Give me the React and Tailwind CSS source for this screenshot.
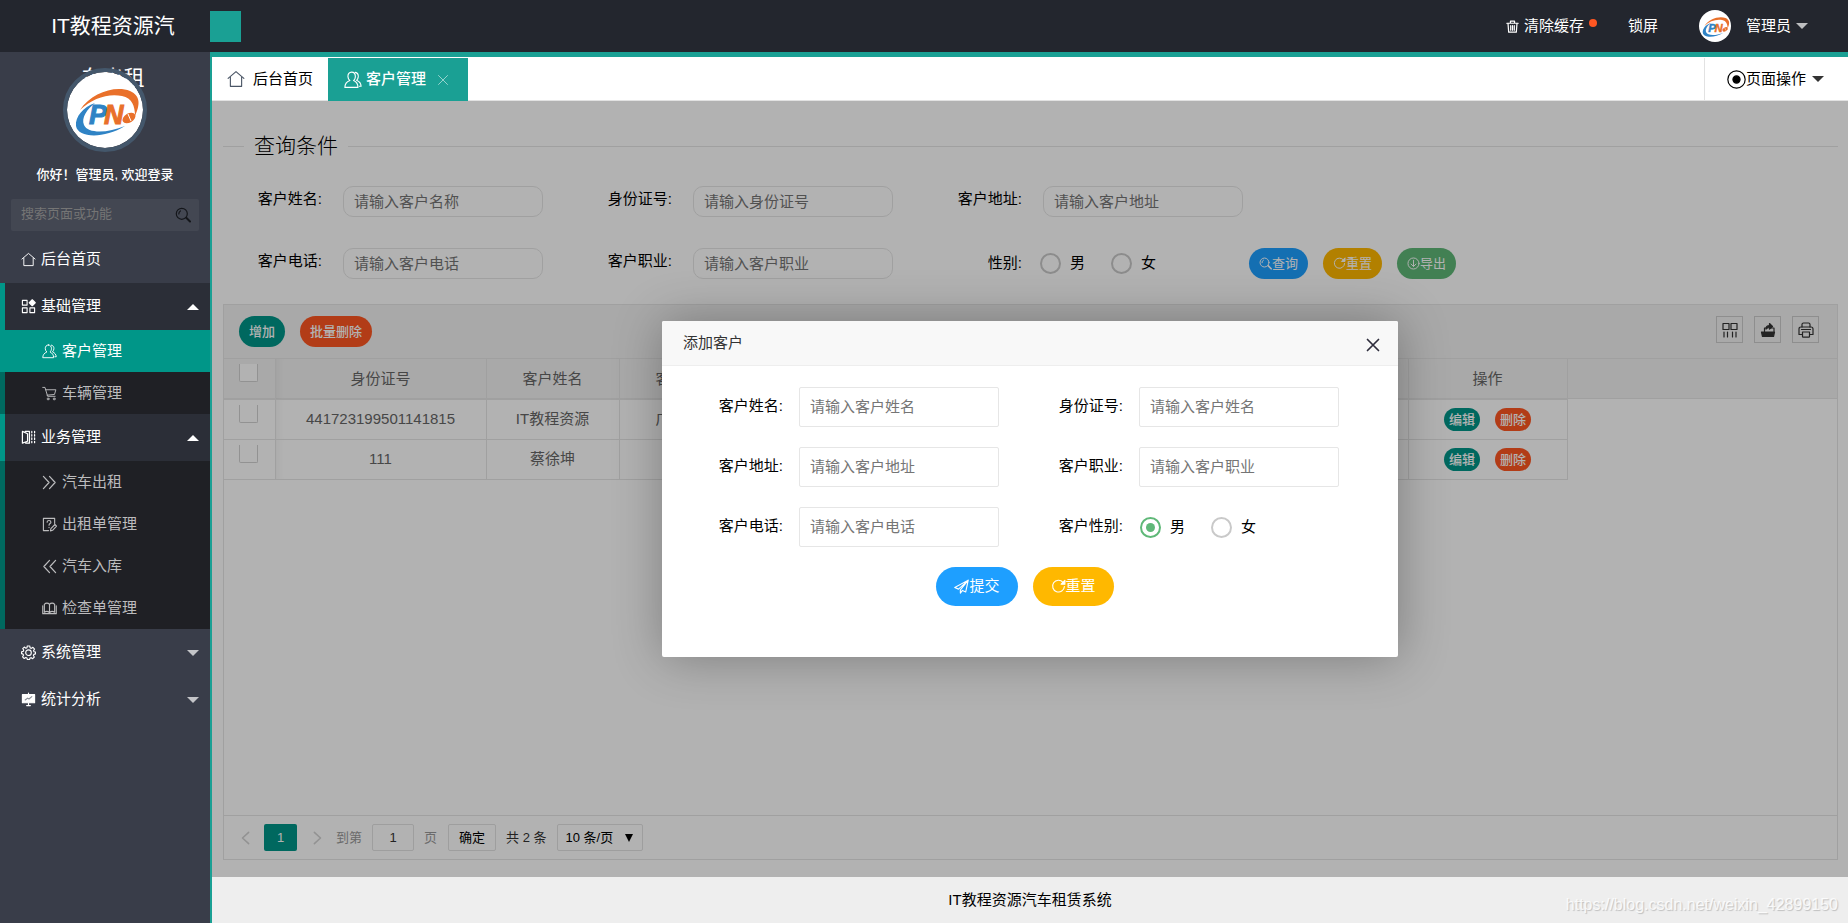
import React, { useState } from 'react';

const fontStack = "font-['Liberation_Sans','Noto_Sans_CJK_SC',sans-serif]";

const Icon = ({ className = 'size-[15px]', children, width = 1.2 }) => (
  <svg
    viewBox="0 0 16 16"
    className={`shrink-0 ${className}`}
    fill="none"
    stroke="currentColor"
    strokeWidth={width}
    strokeLinecap="round"
    strokeLinejoin="round"
    aria-hidden="true"
  >
    {children}
  </svg>
);

const HomeIcon = ({ className }) => (
  <Icon className={className} width={1}>
    <path d="M1 7.500 8 1.500l7 6" />
    <path d="M3 6.500v8h10v-8" />
  </Icon>
);

const UserIcon = ({ className }) => (
  <Icon className={className} width={1}>
    <path d="M6.800 1C4.600 1 3.400 2.800 3.500 5c.1 1.600.7 2.700 1.700 3.500C2.500 9.500.8 11.800.8 14.600h11.600c0-2.800-1.300-5-3.900-6.100 1-.9 1.600-2 1.600-3.500C10.100 2.800 9 1 6.800 1Z" />
    <path d="M10 1.200c1.800.3 2.800 1.800 2.700 3.800-.1 1.300-.6 2.500-1.500 3.300 2.300 1 3.900 3 4 5.300h-1.500" />
  </Icon>
);

const GridIcon = () => (
  <Icon>
    <path d="M1.500 1.500h5v5h-5zM1.500 9.500h5v5h-5zM9.500 9.500h5v5h-5z" />
    <path d="M12 .8 15.200 4 12 7.200 8.800 4Z" fill="currentColor" />
  </Icon>
);

const CartIcon = () => (
  <Icon width={1}>
    <path d="M.8 1.500h2.400L6 11h8" />
    <path d="M3.800 4h11l-1.500 5-7.800.8" />
    <circle cx="6.500" cy="13.800" r="1" />
    <circle cx="13" cy="13.800" r="1" />
  </Icon>
);

const ContractIcon = () => (
  <Icon width={1.3}>
    <path d="M1.500 1.500v12.500M1.500 1.500 7 4v8l-5.500 2M4.500 1.500H9v12.500H5" />
    <path d="M11.500 1.500v13M14.500 1.500v13" strokeDasharray="1.500 2" />
  </Icon>
);

const ForwardIcon = () => (
  <Icon width={1.3}>
    <path d="m1.500 1.500 6 6.500-6 6.500M8 1.500 14 8l-6 6.500" />
  </Icon>
);

const BackwardIcon = () => (
  <Icon width={1.3}>
    <path d="M8 1.500 2 8l6 6.500M14.500 1.500l-6 6.500 6 6.500" />
  </Icon>
);

const SurveyIcon = () => (
  <Icon>
    <path d="M7 14.500H1.500v-13h12V7" />
    <path d="M5.500 5.500c0-2.500 4-2.300 4 0 0 1.500-2 1.500-2 3.200M7.500 11v.3" />
    <path d="m9 14.800.5-2.500L13.800 8l1.700 1.700-4.200 4.500Z" />
  </Icon>
);

const BookIcon = () => (
  <Icon>
    <path d="M8 3.500V13M8 3.500C6.500 1.800 4 1.800 2.500 3.500V12c1.500-1 4-1 5.500.5 1.500-1.500 4-1.500 5.500-.5V3.500C12 1.800 9.500 1.800 8 3.500Z" />
    <path d="M.8 5v8.500h14.400V5" />
  </Icon>
);

const GearIcon = () => (
  <Icon>
    <path d="M6.700 1h2.600l.4 2 1.300.6L12.700 2.500l1.800 1.800L13.400 6l.5 1.200 1.600.3v2l-1.800.5-.5 1.200 1 1.600-1.700 1.800-1.700-1.100-1.200.5-.5 1.500H6.800l-.5-1.700-1.200-.5-1.700 1.100-1.700-1.800 1-1.700-.5-1.200L.6 9.200v-2l1.800-.4L2.900 5.500 1.800 3.800 3.500 2.200 5.200 3.400 6.400 2.900Z" />
    <circle cx="8" cy="8.200" r="3" />
  </Icon>
);

const BoardIcon = () => (
  <Icon>
    <path d="M1.500 2.800h13v8.700h-13z" fill="currentColor" />
    <path d="M8 1v2M8 12v2M6 14.500h4" />
    <path d="m4.500 8.500 2.500-2 1.500 1 3-2.500" className="stroke-[#8b8e96]" />
  </Icon>
);

const TrashIcon = () => (
  <Icon className="size-[13px]" width={1.5}>
    <path d="M1 4h14M5.500 4V1.500h5V4M2.500 4.500l.8 10.500h9.400l.8-10.500M5.800 7v5.500M8 7v5.500M10.200 7v5.500" />
  </Icon>
);

const SearchIcon = ({ className }) => (
  <Icon className={className}>
    <circle cx="6.800" cy="6.800" r="5.500" />
    <path d="M3.800 7c0-1.500.6-2.500 1.600-3.100" />
    <path d="m11.500 11 3.500 3.500" strokeWidth={2} />
  </Icon>
);

const RefreshIcon = ({ className }) => (
  <Icon className={className}>
    <path d="M12.800 3.500A6.300 6.300 0 1 0 14.300 8" />
    <path d="M14.800 1.500v4h-4Z" fill="currentColor" />
  </Icon>
);

const DownloadIcon = ({ className }) => (
  <Icon className={className}>
    <circle cx="8" cy="8" r="6.800" />
    <path d="M8 4v7.500M5 8.700l3 3 3-3" />
  </Icon>
);

const SendIcon = ({ className }) => (
  <Icon className={className}>
    <path d="M15.200 1.200.8 9l4 1.800L15.200 1.200 6.800 11.500V15l2.200-2.800 3.500 1.600Z" />
  </Icon>
);

const ColumnsIcon = () => (
  <Icon className="size-4">
    <path d="M1 1.500h6v6H1zM9 1.500h6v6H9zM2 10v5M5.500 10v5M10.500 10v5M14 10v5" />
  </Icon>
);

const ExportIcon = () => (
  <Icon className="size-4">
    <path d="M1.500 10h13l-1 4.500h-11Z" fill="currentColor" />
    <path d="M4.500 9.500V6H7M10.500 6H14v3.500" />
    <path d="M6 7c0-2 1.500-3.500 3.500-3.500V1.500l3 3-3 2.500V5.500C8 5.500 7 6 6 7Z" fill="currentColor" />
  </Icon>
);

const PrintIcon = () => (
  <Icon className="size-4">
    <path d="M4 5V2.500C4 1.500 4.500 1 5.500 1h5c1 0 1.500.5 1.500 1.500V5" />
    <path d="M4 12.500H1V7c0-1.300.7-2 2-2h10c1.300 0 2 .7 2 2v5.500h-3M3.500 7.500h9" />
    <path d="M4.500 10h7v4.500c0 .5-.2.700-.7.700H5.200c-.5 0-.7-.2-.7-.7Z" />
  </Icon>
);

const Caret = ({ up, className = 'fill-white/70' }) => (
  <svg viewBox="0 0 12 6" className={`h-1.5 w-3 shrink-0 ${className}`} aria-hidden="true">
    <path d={up ? 'M0 6 6 0l6 6Z' : 'M0 0l6 6 6-6Z'} />
  </svg>
);

const Logo = ({ className }) => (
  <svg viewBox="0 0 76 76" className={className} role="img" aria-label="PN">
    <circle cx="38" cy="38" r="38" fill="#fff" />
    <path
      d="M13 38C24 21 48 13 63 19c11 5 10 14 5 25 0-10-3-18-13-20-13-3-30 2-42 14Z"
      fill="#e9702a"
    />
    <path
      d="M28 31C16 35 8 45 9 54c2 12 28 13 49 0-17 7-37 8-41-1-3-7 3-16 11-22Z"
      fill="#2f83c5"
    />
    <g fontFamily="Liberation Sans, sans-serif" fontSize="27" fontWeight="700" fontStyle="italic">
      <text x="22" y="52" fill="#2f83c5" stroke="#2f83c5">P</text>
      <text x="37" y="52" fill="#e9702a" stroke="#e9702a">N</text>
    </g>
    <ellipse cx="62" cy="46" rx="7" ry="4.500" fill="#e9702a" transform="rotate(-30 62 46)" />
    <path d="m61 42 3 7" stroke="#fff" strokeWidth="1" />
  </svg>
);

const menu = [
  { name: '后台首页', icon: <HomeIcon /> },
  {
    name: '基础管理',
    icon: <GridIcon />,
    open: true,
    children: [
      { name: '客户管理', icon: <UserIcon />, active: true },
      { name: '车辆管理', icon: <CartIcon /> }
    ]
  },
  {
    name: '业务管理',
    icon: <ContractIcon />,
    open: true,
    children: [
      { name: '汽车出租', icon: <ForwardIcon /> },
      { name: '出租单管理', icon: <SurveyIcon /> },
      { name: '汽车入库', icon: <BackwardIcon /> },
      { name: '检查单管理', icon: <BookIcon /> }
    ]
  },
  { name: '系统管理', icon: <GearIcon />, children: [] },
  { name: '统计分析', icon: <BoardIcon />, children: [] }
];

const customers = [
  { identity: '441723199501141815', name: 'IT教程资源', address: '广东广州' },
  { identity: '111', name: '蔡徐坤', address: '' }
];

const columns = [
  { title: '身份证号', key: 'identity', width: 'w-[211px] min-w-[211px]' },
  { title: '客户姓名', key: 'name', width: 'w-[133px] min-w-[133px]' },
  { title: '客户地址', key: 'address', width: 'w-[133px] min-w-[133px]' },
  { title: '', key: 'more', width: 'w-[656px] min-w-[656px]' }
];

const Header = () => (
  <header className="relative z-10 flex h-[52px] shrink-0 bg-[#23262e] text-white">
    <div className="flex w-[210px] shrink-0 justify-center pl-4">
      <h1 className="w-[130px] text-center text-[21px] leading-[52px]">
        IT教程资源汽车出租
      </h1>
    </div>
    <button type="button" aria-label="收起菜单" className="mt-[11px] size-[31px] bg-[#1aa094]" />
    <ul className="ml-auto flex items-center pr-10 text-[15px]">
      <li className="mr-[31px]">
        <a href="#cache" className="flex items-center gap-[5px]">
          <TrashIcon />
          清除缓存
          <span className="mb-1.5 size-2 rounded-full bg-[#ff5722]" />
        </a>
      </li>
      <li className="mr-[41px]">
        <a href="#lock">锁屏</a>
      </li>
      <li>
        <a href="#user" className="flex items-center">
          <Logo className="size-8" />
          <span className="mr-[5px] ml-[15px]">管理员</span>
          <Caret />
        </a>
      </li>
    </ul>
  </header>
);

const Sidebar = () => (
  <aside className="w-[210px] shrink-0 bg-[#393d49] text-white">
    <div className="flex flex-col items-center pt-4">
      <Logo className="relative z-20 size-[84px] rounded-full border-4 border-[#44576b]" />
      <p className="mt-[13px] text-[13px] leading-5 font-medium">你好！管理员, 欢迎登录</p>
    </div>
    <div className="mx-[11px] mt-3.5 mb-[5px] flex h-8 items-center rounded-xs bg-white/5 pr-2 pl-2.5">
      <input
        type="text"
        aria-label="搜索页面或功能"
        placeholder="搜索页面或功能"
        className="min-w-0 flex-1 bg-transparent pb-0.5 text-[13px] outline-none placeholder:text-[#757575]"
      />
      <button type="button" aria-label="搜索" className="text-[#14161a]">
        <SearchIcon className="size-4" />
      </button>
    </div>
    <nav className="text-[15px]">
      {menu.map(item => (
        <div key={item.name} className={item.open ? 'border-l-[5px] border-[#009688]' : ''}>
          <a
            href="#menu"
            className={`flex h-[47px] items-center pr-[11px] ${
              item.open ? 'bg-[#2b2e37] pl-4' : 'pl-[21px]'
            }`}
          >
            {item.icon}
            <span className="ml-[5px] flex-1">{item.name}</span>
            {item.children && (
              <Caret up={item.open} className={item.open ? 'fill-white' : 'fill-white/70'} />
            )}
          </a>
          {item.open && (
            <ul className="-ml-[5px]">
              {item.children.map(child => (
                <li key={child.name}>
                  <a
                    href="#page"
                    className={`flex h-[42px] items-center gap-[5px] border-l-[5px] pl-[37px] ${
                      child.active
                        ? 'border-[#009688] bg-[#009688] text-white'
                        : 'border-[#00695f] bg-[#1f2025] text-[#bcbcbe]'
                    }`}
                  >
                    {child.icon}
                    {child.name}
                  </a>
                </li>
              ))}
            </ul>
          )}
        </div>
      ))}
    </nav>
  </aside>
);

const TabBar = () => (
  <div className="flex h-11 shrink-0 border-b border-[#e2e2e2] bg-white pt-px text-[15px]">
    <a href="#home" className="flex items-center gap-2 px-[15px]">
      <HomeIcon className="size-[18px] text-gray-600" />
      后台首页
    </a>
    <div className="-mb-px flex w-[140px] items-center bg-[#1aa094] pl-4 text-white">
      <a href="#customers" className="flex items-center gap-1 font-medium">
        <UserIcon className="size-[18px]" />
        客户管理
      </a>
      <button type="button" aria-label="关闭" className="ml-[11px] text-white/60">
        <Icon className="size-3">
          <path d="m2 2 12 12M14 2 2 14" />
        </Icon>
      </button>
    </div>
    <button
      type="button"
      className="ml-auto flex items-center border-l border-[#e2e2e2] pr-6 pl-[22px]"
    >
      <Icon className="size-[19px]" width={1}>
        <circle cx="8" cy="8" r="7.300" />
        <circle cx="8" cy="8" r="3" fill="currentColor" />
      </Icon>
      <span className="mr-1.5">页面操作</span>
      <Caret className="fill-[#333]" />
    </button>
  </div>
);

const Radio = ({ name, label, value, onChange, current }) => (
  <label className="flex items-center gap-[9px]">
    <input
      type="radio"
      name={name}
      checked={current === value}
      onChange={() => onChange(value)}
      className="size-[21px] appearance-none rounded-full border-2 border-[#c9c9c9] bg-clip-content p-1 checked:border-[#5fb878] checked:bg-[#5fb878]"
    />
    {label}
  </label>
);

const QueryField = ({ id, label, placeholder }) => (
  <div className="flex w-[350px] items-center">
    <label htmlFor={id} className="w-[99px] pb-1 text-right">{label}:</label>
    <input
      id={id}
      type="text"
      placeholder={placeholder}
      className="ml-[21px] h-[31px] w-[200px] rounded-[10px] border border-[#e6e6e6] px-2.5 outline-none placeholder:text-[#757575]"
    />
  </div>
);

const QueryForm = () => {
  const [sex, setSex] = useState('');

  return (
    <form className="text-[15px]">
      <fieldset className="border-t border-[#e6e6e6]">
        <legend className="ml-[21px] px-2.5 text-[21px] leading-8 font-light">查询条件</legend>
      </fieldset>
      <div className="mt-6 flex flex-wrap">
        <QueryField id="q-name" label="客户姓名" placeholder="请输入客户名称" />
        <QueryField id="q-identity" label="身份证号" placeholder="请输入身份证号" />
        <QueryField id="q-address" label="客户地址" placeholder="请输入客户地址" />
      </div>
      <div className="mt-[31px] flex flex-wrap">
        <QueryField id="q-phone" label="客户电话" placeholder="请输入客户电话" />
        <QueryField id="q-career" label="客户职业" placeholder="请输入客户职业" />
        <div className="flex items-center">
          <span className="w-[99px] text-right">性别:</span>
          <div className="ml-[18px] flex w-[209px] gap-[26px]">
            <Radio name="q-sex" label="男" value="1" current={sex} onChange={setSex} />
            <Radio name="q-sex" label="女" value="0" current={sex} onChange={setSex} />
          </div>
          <div className="flex gap-[15px] text-[13px] text-white">
            <button type="button" className="flex h-[31px] items-center rounded-full bg-[#1e9fff] px-2.5">
              <SearchIcon className="size-[13px]" />
              查询
            </button>
            <button type="reset" className="flex h-[31px] items-center rounded-full bg-[#ffb800] px-2.5">
              <RefreshIcon className="size-[13px]" />
              重置
            </button>
            <button type="button" className="flex h-[31px] items-center rounded-full bg-[#5fb878] px-2.5">
              <DownloadIcon className="size-[13px]" />
              导出
            </button>
          </div>
        </div>
      </div>
    </form>
  );
};

const Check = ({ label }) => (
  <input
    type="checkbox"
    aria-label={label}
    className="block h-[18px] w-[19px] appearance-none rounded-b-xs border border-t-0 border-[#d2d2d2] bg-white checked:bg-[#5fb878]"
  />
);

const edgeShadow = 'shadow-[inset_9px_0_8px_-8px_rgba(0,0,0,0.06)]';

const CustomerTable = () => (
  <div className="overflow-x-auto">
    <div className="h-[121px]">
      <div className="h-10 border-b border-[#e6e6e6] bg-[#f2f2f2]">
        <table className="table-fixed border-collapse text-[15px] text-[#666]">
          <thead>
            <tr className="h-10 border-b border-[#e6e6e6]">
              <th className="w-[51px] min-w-[51px] border-r border-[#e6e6e6] pt-[5px] pl-[15px] align-top">
                <Check label="全选" />
              </th>
              {columns.map((col, i) => (
                <th
                  key={col.key}
                  className={`border-r border-[#e6e6e6] font-normal ${col.width} ${i === 0 ? edgeShadow : ''}`}
                >
                  {col.title}
                </th>
              ))}
              <th className="w-[159px] min-w-[159px] border-r border-[#e6e6e6] font-normal">操作</th>
            </tr>
          </thead>
          <tbody className="bg-white">
            {customers.map(row => (
              <tr key={row.identity} className="h-10 border-b border-[#e6e6e6]">
                <td className="border-r border-[#e6e6e6] pt-[5px] pl-[15px] align-top">
                  <Check label={row.name} />
                </td>
                {columns.map((col, i) => (
                  <td
                    key={col.key}
                    className={`border-r border-[#e6e6e6] text-center ${i === 0 ? edgeShadow : ''}`}
                  >
                    {row[col.key]}
                  </td>
                ))}
                <td className="border-r border-[#e6e6e6]">
                  <div className="flex justify-center gap-[15px] text-[13px] leading-[23px] font-medium text-white">
                    <button type="button" className="rounded-full bg-[#009688] px-[5px]">编辑</button>
                    <button type="button" className="rounded-full bg-[#ff5722] px-[5px]">删除</button>
                  </div>
                </td>
              </tr>
            ))}
          </tbody>
        </table>
      </div>
    </div>
  </div>
);

const Pagination = () => (
  <div className="flex h-11 shrink-0 items-center border-t border-[#e6e6e6] px-[15px] text-[13px] text-[#333]">
    <button type="button" aria-label="上一页" className="text-[#d2d2d2]">
      <Icon className="size-3.5" width={1.8}>
        <path d="M11 1.500 4 8l7 6.500" />
      </Icon>
    </button>
    <button type="button" className="ml-[11px] h-[27px] w-[33px] rounded-xs bg-[#009688] font-medium text-white">
      1
    </button>
    <button type="button" aria-label="下一页" className="ml-[13px] text-[#d2d2d2]">
      <Icon className="size-3.5" width={1.8}>
        <path d="m5 1.500 7 6.500-7 6.500" />
      </Icon>
    </button>
    <label htmlFor="page-no" className="ml-3 text-[#999]">到第</label>
    <input
      id="page-no"
      type="text"
      defaultValue="1"
      className="mx-2.5 h-[27px] w-[42px] rounded-xs border border-[#e2e2e2] text-center outline-none"
    />
    <span className="text-[#999]">页</span>
    <button type="button" className="mr-2.5 ml-[11px] h-[27px] w-12 rounded-xs border border-[#e2e2e2] text-black">
      确定
    </button>
    <span>共 2 条</span>
    <div className="relative ml-2.5 flex items-center text-black">
      <select
        aria-label="每页条数"
        className="h-[27px] w-[86px] appearance-none rounded-xs border border-[#e2e2e2] pl-2 outline-none"
      >
        <option>10 条/页</option>
        <option>20 条/页</option>
      </select>
      <svg viewBox="0 0 8 8" className="pointer-events-none absolute right-2.5 size-2" aria-hidden="true">
        <path d="M0 0h8L4 8Z" />
      </svg>
    </div>
  </div>
);

const ModalField = ({ id, label, placeholder }) => (
  <div className="flex items-center">
    <label htmlFor={id} className="w-[121px] pb-0.5 text-right">{label}:</label>
    <input
      id={id}
      type="text"
      placeholder={placeholder}
      className="ml-4 h-10 w-[200px] rounded-xs border border-[#e6e6e6] px-2.5 pb-0.5 outline-none placeholder:text-[#757575]"
    />
  </div>
);

const AddCustomerModal = () => {
  const [sex, setSex] = useState('1');

  return (
    <div className="absolute inset-0 flex items-center justify-center bg-black/30">
      <div
        role="dialog"
        aria-labelledby="modal-title"
        className="w-[736px] rounded-xs bg-white pb-[51px] text-[15px] shadow-[1px_1px_50px_rgba(0,0,0,0.3)]"
      >
        <div className="flex h-[45px] items-center justify-between rounded-t-xs border-b border-[#eee] bg-[#f8f8f8] pr-[17px] pl-[21px]">
          <h2 id="modal-title" className="text-[#333]">添加客户</h2>
          <button type="button" aria-label="关闭" className="pt-1 text-[#2e2d3c]">
            <Icon className="size-4" width={1.7}>
              <path d="m2.500 2.500 11 11M13.500 2.500l-11 11" />
            </Icon>
          </button>
        </div>
        <form>
          <div className="grid grid-cols-[340px_1fr] gap-y-5 pt-[21px]">
            <ModalField id="m-name" label="客户姓名" placeholder="请输入客户姓名" />
            <ModalField id="m-identity" label="身份证号" placeholder="请输入客户姓名" />
            <ModalField id="m-address" label="客户地址" placeholder="请输入客户地址" />
            <ModalField id="m-career" label="客户职业" placeholder="请输入客户职业" />
            <ModalField id="m-phone" label="客户电话" placeholder="请输入客户电话" />
            <div className="flex items-center">
              <span className="w-[121px] pb-0.5 text-right">客户性别:</span>
              <div className="ml-[17px] flex gap-[26px]">
                <Radio name="m-sex" label="男" value="1" current={sex} onChange={setSex} />
                <Radio name="m-sex" label="女" value="0" current={sex} onChange={setSex} />
              </div>
            </div>
          </div>
          <div className="mt-5 flex justify-center gap-[15px] pr-2.5 text-white">
            <button type="button" className="flex h-[39px] items-center rounded-full bg-[#1e9fff] px-[18px]">
              <SendIcon className="size-[15px]" />
              提交
            </button>
            <button type="reset" className="flex h-[39px] items-center rounded-full bg-[#ffb800] px-[18px]">
              <RefreshIcon className="size-[15px]" />
              重置
            </button>
          </div>
        </form>
      </div>
    </div>
  );
};

const toolButton = 'flex size-[27px] items-center justify-center border border-[#ccc]';

const App = () => (
  <div className={`flex min-h-screen flex-col text-black ${fontStack}`}>
    <Header />
    <div className="flex flex-1">
      <Sidebar />
      <div className="flex min-w-0 flex-1 flex-col border-t-[5px] border-l-2 border-[#1aa094]">
        <TabBar />

        <main className="relative flex flex-1 flex-col bg-white pt-[29px] pr-2.5 pb-[17px] pl-[11px]">
          <QueryForm />

          {/* Customer list */}
          <section className="mt-[25px] flex flex-1 flex-col border border-[#e6e6e6]">
            <div className="flex h-[54px] shrink-0 items-start border-b border-[#e6e6e6] bg-[#f2f2f2] px-[15px] pt-[11px]">
              <div className="flex gap-[15px] text-[13px] leading-[31px] font-medium text-white">
                <button type="button" className="rounded-full bg-[#009688] px-2.5">增加</button>
                <button type="button" className="rounded-full bg-[#ff5722] px-2.5">批量删除</button>
              </div>
              <div className="ml-auto flex gap-[11px] pr-[3px] text-[#333]">
                <button type="button" aria-label="筛选列" className={toolButton}><ColumnsIcon /></button>
                <button type="button" aria-label="导出" className={toolButton}><ExportIcon /></button>
                <button type="button" aria-label="打印" className={toolButton}><PrintIcon /></button>
              </div>
            </div>
            <CustomerTable />
            <div className="flex-1" />
            <Pagination />
          </section>

          <AddCustomerModal />
        </main>

        <footer className="relative flex h-[46px] shrink-0 items-center justify-center bg-[#eee] text-[15px]">
          IT教程资源汽车租赁系统
          <span className="absolute right-2.5 bottom-1.5 text-[16px] leading-6 text-white/80 [text-shadow:1px_1px_1px_rgba(0,0,0,0.2)]">
            https://blog.csdn.net/weixin_42899150
          </span>
        </footer>
      </div>
    </div>
  </div>
);

export default App;
